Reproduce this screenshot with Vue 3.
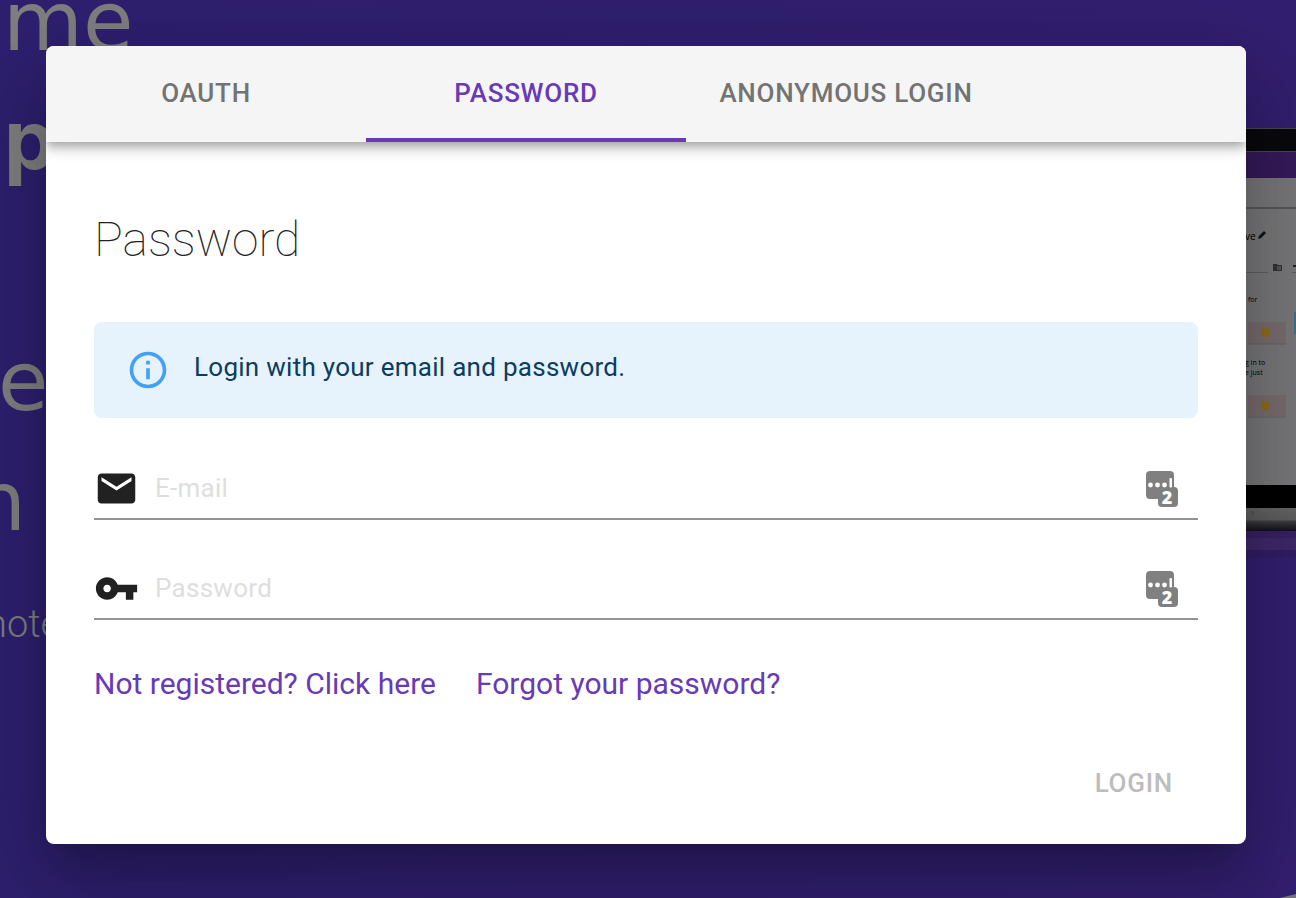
<script setup>
import { ref } from 'vue'

const tabs = [
  { id: 'oauth', label: 'OAuth' },
  { id: 'password', label: 'Password' },
  { id: 'anonymous', label: 'Anonymous Login' }
]
const active = ref('password')

const email = ref('')
const password = ref('')

const fields = [
  {
    id: 'email',
    label: 'E-mail',
    type: 'email',
    model: email,
    icon: 'M20 4H4c-1.1 0-1.99.9-1.99 2L2 18c0 1.1.9 2 2 2h16c1.1 0 2-.9 2-2V6c0-1.1-.9-2-2-2zm0 4l-8 5-8-5V6l8 5 8-5v2z'
  },
  {
    id: 'password',
    label: 'Password',
    type: 'password',
    model: password,
    icon: 'M12.65 10C11.83 7.67 9.61 6 7 6c-3.31 0-6 2.69-6 6s2.69 6 6 6c2.61 0 4.83-1.67 5.65-4H17v4h4v-4h2v-4H12.65zM7 14c-1.1 0-2-.9-2-2s.9-2 2-2 2 .9 2 2-.9 2-2 2z'
  }
]
</script>

<template>
  <div class="page">
    <div class="hero" aria-hidden="true">
      <span class="word word-me">me</span>
      <span class="word word-p">p</span>
      <span class="word word-e">e</span>
      <span class="word word-n">n</span>
      <span class="word word-note">note</span>
    </div>

    <svg class="tablet" viewBox="0 0 50 430" width="50" height="430" aria-hidden="true">
      <defs>
        <linearGradient id="base" x1="0" y1="0" x2="0" y2="1">
          <stop offset="0" stop-color="#646464" />
          <stop offset="0.500" stop-color="#5c5c5c" />
          <stop offset="0.600" stop-color="#3a393b" />
          <stop offset="1" stop-color="#141019" />
        </linearGradient>
      </defs>
      <rect y="0" width="50" height="24" fill="#0a090b" />
      <path d="M0 .5H50M0 23.500H50" stroke="#4a4651" />
      <rect y="24" width="50" height="26" fill="#351a59" />
      <rect y="50" width="50" height="308" fill="#777678" />
      <path d="M0 80H50" stroke="#57565a" stroke-width="2" />
      <text x="-1" y="112" font-size="10">ve</text>
      <path d="M12 111l1-3 5-5 2 2-5 5z" fill="#111" />
      <path d="M27 136h4l1 1h4v6h-9z" fill="#333236" />
      <path d="M31 139h4M31 141h4" stroke="#77767a" />
      <path d="M47 138h3" stroke="#222" stroke-width="2" />
      <path d="M0 144.500H22M46 144.500H50" stroke="#5e5d60" />
      <text x="2" y="174" font-size="7">for</text>
      <rect x="48" y="184" width="2" height="22" fill="#456f84" />
      <rect x="2" y="194" width="38" height="22" fill="#786c6d" />
      <path d="M2 216H40M2 289H40" stroke="#666064" />
      <rect x="2" y="267" width="38" height="21" fill="#786c6d" />
      <g fill="#8e6b19">
        <path d="M15 202l2-2 2 1 2-1 3 3v4l-3 2h-4l-2-3z" />
        <path d="M15 275l2-2 2 1 2-1 3 3v4l-3 2h-4l-2-3z" />
      </g>
      <text x="-1" y="237" font-size="7">g in to</text>
      <text x="-1" y="247" font-size="7">e just</text>
      <rect y="357" width="50" height="23" fill="#020202" />
      <rect y="380" width="50" height="23" fill="url(#base)" />
      <path d="M4 384h4l-2 4" stroke="#4c4b4e" fill="none" />
      <rect y="403" width="50" height="7" fill="#382063" />
      <rect y="410" width="50" height="12" fill="#3e2869" />
      <rect y="422" width="50" height="8" fill="#321c65" />
    </svg>
    <span class="swoosh" aria-hidden="true"></span>

    <main class="dialog" role="dialog" aria-labelledby="dialog-title">
      <div class="tabs" role="tablist">
        <button
          v-for="tab in tabs"
          :key="tab.id"
          class="tab"
          :class="{ selected: active === tab.id }"
          type="button"
          role="tab"
          :aria-selected="active === tab.id"
          @click="active = tab.id"
        >
          {{ tab.label }}
        </button>
      </div>

      <form class="content" @submit.prevent>
        <h1 id="dialog-title">Password</h1>

        <div class="alert" role="note">
          <svg class="alert-icon" viewBox="0 0 24 24" aria-hidden="true">
            <path d="M11,9H13V7H11M12,20C7.59,20 4,16.41 4,12C4,7.59 7.59,4 12,4C16.41,4 20,7.59 20,12C20,16.41 16.41,20 12,20M12,2A10,10 0 0,0 2,12A10,10 0 0,0 12,22A10,10 0 0,0 22,12A10,10 0 0,0 12,2M11,17H13V11H11V17Z" />
          </svg>
          <p>Login with your email and password.</p>
        </div>

        <div class="fields">
          <div v-for="field in fields" :key="field.id" class="field">
            <label :for="field.id" :aria-label="field.label">
              <svg class="field-icon" viewBox="0 0 24 24" aria-hidden="true">
                <path :d="field.icon" />
              </svg>
            </label>
            <input
              :id="field.id"
              v-model="field.model.value"
              :type="field.type"
              :placeholder="field.label"
            />
            <svg class="manager" viewBox="0 0 32 36" aria-hidden="true">
              <rect width="28" height="28" rx="4" fill="#808080" />
              <rect x="12" y="16" width="20" height="20" rx="4" fill="#808080" />
              <g fill="#fff">
                <circle cx="4.500" cy="14" r="2.400" />
                <circle cx="11.500" cy="14" r="2.400" />
                <circle cx="18.500" cy="14" r="2.400" />
                <rect x="23.500" y="7" width="2.500" height="9.500" rx="1" />
              </g>
              <text x="21" y="33" text-anchor="middle" class="manager-count">2</text>
            </svg>
          </div>
        </div>

        <nav class="links">
          <a href="#register">Not registered? Click here</a>
          <a href="#reset">Forgot your password?</a>
        </nav>

        <div class="actions">
          <button class="login" type="submit" disabled>Login</button>
        </div>
      </form>
    </main>
  </div>
</template>

<style>
html,
body {
  margin: 0;
}
</style>

<style scoped>
.page {
  position: relative;
  box-sizing: border-box;
  min-height: 100vh;
  padding: 46px 50px 54px 46px;
  overflow: hidden;
  background: linear-gradient(90deg, #2e206f, #311f6f 50%, #331f70);
  font-family: Roboto, "Liberation Sans", sans-serif;
}

/* Landing page behind the dialog */
.word {
  position: absolute;
  color: #7f7f7f;
  font-family: "DejaVu Sans", sans-serif;
  font-size: 82px;
  line-height: 120px;
}
.word-me {
  top: -38px;
  left: 3px;
}
.word-p {
  top: 80px;
  left: 4px;
  font-family: Inter, sans-serif;
  font-weight: 700;
}
.word-e {
  top: 322px;
  left: -2px;
}
.word-n {
  top: 442px;
  left: -26px;
}
.word-note {
  top: 600px;
  left: -14px;
  font-family: Roboto, sans-serif;
  font-size: 38px;
  font-weight: 300;
  line-height: 48px;
}
.tablet {
  position: absolute;
  top: 128px;
  right: 0;
  font-family: "Open Sans", sans-serif;
}
.swoosh {
  position: absolute;
  right: 0;
  bottom: 0;
  width: 16px;
  height: 4px;
  background: #777;
  clip-path: polygon(100% 0, 100% 100%, 0 100%);
}

.dialog {
  position: relative;
  overflow: hidden;
  border-radius: 8px;
  background: #fff;
  box-shadow:
    0 22px 30px -14px rgba(0, 0, 0, 0.2),
    0 48px 76px 6px rgba(0, 0, 0, 0.14),
    0 18px 92px 16px rgba(0, 0, 0, 0.12);
}

.tabs {
  position: relative;
  display: flex;
  background: #f5f5f5;
  box-shadow:
    0 4px 8px -2px rgba(0, 0, 0, 0.2),
    0 8px 10px 0 rgba(0, 0, 0, 0.14),
    0 2px 20px 0 rgba(0, 0, 0, 0.12);
}
.tab {
  flex: 0 1 320px;
  height: 96px;
  padding: 2px 24px 0;
  border: 0;
  border-bottom: 4px solid transparent;
  background: none;
  color: #737373;
  font: 500 26px/46px Roboto, sans-serif;
  letter-spacing: 0.02857em;
  text-transform: uppercase;
  white-space: nowrap;
  cursor: pointer;
}
.tab.selected {
  border-bottom-color: #673ab7;
  color: #673ab7;
}

.content {
  padding: 66px 48px 28px;
}
h1 {
  margin: 0;
  color: #212121;
  font-size: 48px;
  font-weight: 100;
  line-height: 64px;
}

.alert {
  display: flex;
  align-items: center;
  gap: 24px;
  box-sizing: border-box;
  min-height: 96px;
  margin-top: 50px;
  padding: 12px 32px;
  border-radius: 8px;
  background: #e6f3fd;
}
.alert-icon {
  flex: none;
  width: 44px;
  height: 44px;
  fill: #42a1f5;
}
.alert p {
  margin: 0;
  padding-bottom: 6px;
  color: #0d3c61;
  font-size: 26px;
  line-height: 38px;
  letter-spacing: 0.01071em;
}

.fields {
  display: grid;
  gap: 36px;
  margin-top: 38px;
}
.field {
  display: flex;
  align-items: center;
  box-sizing: border-box;
  height: 64px;
  padding: 3px 20px 0 0;
  border-bottom: 2px solid #949494;
}
.field label {
  display: flex;
}
.field-icon {
  width: 45px;
  height: 45px;
  fill: #212121;
}
.field input {
  flex: 1;
  min-width: 0;
  margin-left: 16px;
  padding: 0 0 2px;
  border: 0;
  outline: 0;
  background: none;
  color: #212121;
  font: 400 26px/38px Roboto, sans-serif;
  letter-spacing: 0.01071em;
}
.field input::placeholder {
  color: #dedede;
  opacity: 1;
}
.manager {
  flex: none;
  width: 32px;
  height: 36px;
}
.manager-count {
  fill: #fff;
  font: 800 18px "Open Sans", sans-serif;
}

.links {
  display: flex;
  flex-wrap: wrap;
  gap: 12px 40px;
  margin-top: 42px;
}
.links a {
  color: #673ab7;
  font-size: 30px;
  line-height: 44px;
  text-decoration: none;
}

.actions {
  display: flex;
  justify-content: flex-end;
  margin-top: 45px;
  margin-bottom: 1px;
}
.login {
  height: 64px;
  padding: 0 25px;
  border: 0;
  background: none;
  color: #bdbdbd;
  font: 500 26px/46px Roboto, sans-serif;
  letter-spacing: 0.02857em;
  text-transform: uppercase;
}
</style>
